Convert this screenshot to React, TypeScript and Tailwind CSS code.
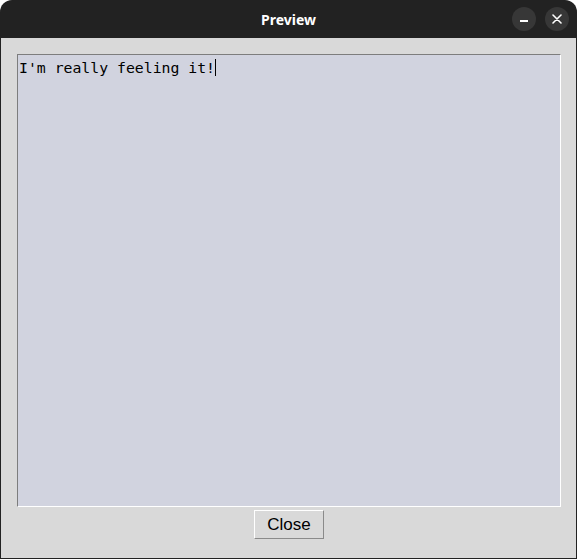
import React from "react";

const App: React.FC = () => {
    return (
        <div className="w-[577px] h-[559px] bg-white">
            <div className="flex flex-col w-full h-full bg-[#222222] rounded-t-[12px] overflow-hidden">
                <div className="relative flex items-center justify-center h-[38px] shrink-0">
                    <span className="text-white font-bold text-[14px]" style={{ fontFamily: '"Noto Sans", sans-serif' }}>
                        Preview
                    </span>
                    <div className="absolute right-[8px] top-[7px] flex gap-[9px]">
                        <div className="flex items-center justify-center w-[24px] h-[24px] rounded-full bg-[#373737]">
                            <div className="w-[8px] h-[1.5px] bg-white mt-[4px]" />
                        </div>
                        <div className="flex items-center justify-center w-[24px] h-[24px] rounded-full bg-[#373737]">
                            <svg width="10" height="10" viewBox="0 0 10 10">
                                <path d="M1 1 L9 9 M9 1 L1 9" stroke="white" strokeWidth="1.6" strokeLinecap="round" />
                            </svg>
                        </div>
                    </div>
                </div>
                <div className="flex flex-col flex-1 bg-[#d9d9d9] mx-px mb-px pl-4 pr-[15px] pt-4">
                    {/* text area: dark top/left edge, white bottom/right edge */}
                    <div className="h-[453px] bg-[#d1d3df] border border-t-[#7d7d7d] border-l-[#7d7d7d] border-b-white border-r-white px-[1px] pt-0">
                        <span
                            className="text-black text-[14.8px] leading-[20px]"
                            style={{ fontFamily: '"DejaVu Sans Mono", monospace' }}
                        >
                            I'm really feeling it!
                        </span>
                        <span className="inline-block w-px h-[17px] bg-black align-[-3px]" />
                    </div>
                    <div className="flex justify-center mt-[3px]">
                        <button
                            className="w-[70px] h-[29px] bg-[#d9d9d9] border border-t-white border-l-white border-b-[#8a8a8a] border-r-[#8a8a8a] text-black text-[17px]"
                            style={{ fontFamily: '"Liberation Sans", Arial, sans-serif' }}
                        >
                            Close
                        </button>
                    </div>
                </div>
            </div>
        </div>
    );
};

export default App;
